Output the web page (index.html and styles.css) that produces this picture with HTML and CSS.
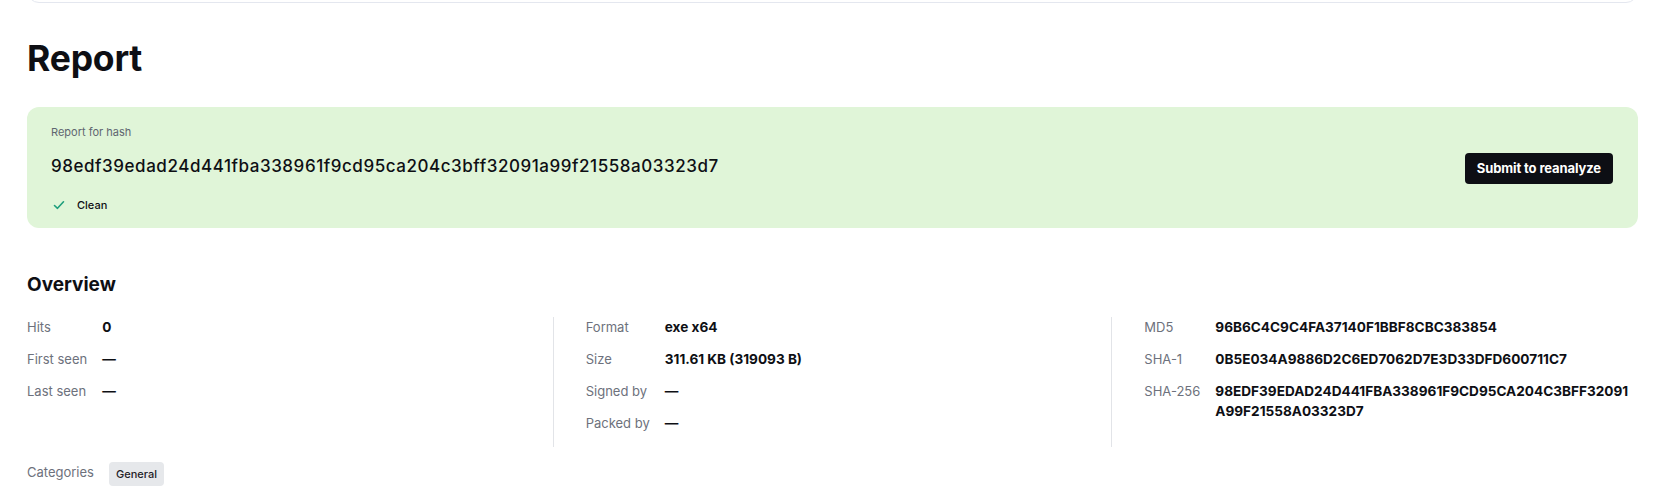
FILE: index.html
```html
<!DOCTYPE html>
<html lang="en">
<head>
<meta charset="utf-8">
<title>Report</title>
<link rel="stylesheet" href="styles.css">
</head>
<body>
<div class="page">
  <div class="top-card"></div>
  <h1 class="title">Report</h1>
  <section class="verdict">
    <div class="verdict-info">
      <div class="verdict-caption">Report for hash</div>
      <div class="verdict-hash">98edf39edad24d441fba338961f9cd95ca204c3bff32091a99f21558a03323d7</div>
      <div class="verdict-status">
        <svg class="check" width="12" height="12" viewBox="0 0 12 12"><path d="M1.5 6.5 L4.5 9.3 L10.5 2.8" fill="none" stroke="#1f9f7c" stroke-width="1.6" stroke-linecap="round" stroke-linejoin="round"/></svg>
        <span>Clean</span>
      </div>
    </div>
    <button class="btn">Submit to reanalyze</button>
  </section>

  <h2 class="section-title">Overview</h2>
  <div class="overview">
    <dl class="col col-first">
      <dt>Hits</dt><dd>0</dd>
      <dt>First seen</dt><dd>—</dd>
      <dt>Last seen</dt><dd>—</dd>
    </dl>
    <dl class="col col-mid">
      <dt>Format</dt><dd>exe x64</dd>
      <dt>Size</dt><dd>311.61 KB (319093 B)</dd>
      <dt>Signed by</dt><dd>—</dd>
      <dt>Packed by</dt><dd>—</dd>
    </dl>
    <dl class="col col-last">
      <dt>MD5</dt><dd>96B6C4C9C4FA37140F1BBF8CBC383854</dd>
      <dt>SHA-1</dt><dd>0B5E034A9886D2C6ED7062D7E3D33DFD600711C7</dd>
      <dt>SHA-256</dt><dd class="wrap">98EDF39EDAD24D441FBA338961F9CD95CA204C3BFF32091<br>A99F21558A03323D7</dd>
    </dl>
  </div>
  <div class="categories">
    <span class="cat-label">Categories</span>
    <span class="chip">General</span>
  </div>
</div>
</body>
</html>
```

FILE: styles.css
```css
* { box-sizing: border-box; }
html, body { margin: 0; padding: 0; background: #fff; }
body {
  font-family: Inter, "Noto Sans", "Liberation Sans", sans-serif;
  color: #0e0f14;
  overflow: hidden;
}
.page {
  padding: 0 32px 0 27px;
}
.top-card {
  height: 40px;
  margin-top: -37px;
  border: 1px solid #e4e7ef;
  border-radius: 12px;
  background: #fff;
}
.title {
  margin: 34px 0 0;
  font-size: 35.5px;
  line-height: 44px;
  font-weight: 700;
  letter-spacing: -0.2px;
}
.verdict {
  margin-top: 26px;
  background: #e0f5d8;
  border-radius: 12px;
  padding: 15px 24px 14px 24px;
  display: flex;
  align-items: center;
  justify-content: space-between;
  height: 121px;
}
.verdict-caption {
  font-size: 11px;
  line-height: 16px;
  color: #5f6670;
}
.verdict-hash {
  margin-top: 14px;
  font-size: 17px;
  line-height: 24px;
  font-weight: 500;
  letter-spacing: 0.55px;
}
.verdict-status {
  margin-top: 19px;
  display: flex;
  align-items: center;
  gap: 12px;
  font-size: 11px;
  font-weight: 500;
  line-height: 16px;
}
.check { margin-left: 2px; }
.btn {
  background: #0d0e14;
  color: #fff;
  border: 0;
  border-radius: 4px;
  height: 31px;
  padding: 0 12px;
  font-family: inherit;
  font-size: 13px;
  font-weight: 700;
  letter-spacing: -0.1px;
  margin-right: 1px;
  margin-top: 0;
}
.section-title {
  margin: 43px 0 0;
  font-size: 19px;
  line-height: 28px;
  font-weight: 700;
}
.overview {
  display: flex;
  margin-top: 18px;
}
.col {
  flex: 1 1 0;
  margin: 0;
  display: grid;
  grid-template-columns: auto 1fr;
  column-gap: 15px;
  row-gap: 12px;
  align-content: start;
  padding-bottom: 14px;
  font-size: 13px;
  line-height: 20px;
}
.col-first { padding-right: 32px; }
.col-mid { border-left: 1px solid #e2e4e8; padding-left: 32px; padding-right: 32px; }
.col-last { border-left: 1px solid #e2e4e8; padding-left: 32px; }
.col dt { color: #6d717c; }
.col dd { margin: 0; font-weight: 700; font-size: 13.6px; }
.categories {
  margin-top: 15px;
  display: flex;
  align-items: flex-start;
  gap: 15px;
}
.cat-label {
  font-size: 13px;
  line-height: 20px;
  color: #6d717c;
}
.chip {
  background: #e6e8eb;
  border-radius: 4px;
  font-size: 11px;
  line-height: 24px;
  padding: 0 7px;
  color: #1f2128;
  font-weight: 500;
}
```
